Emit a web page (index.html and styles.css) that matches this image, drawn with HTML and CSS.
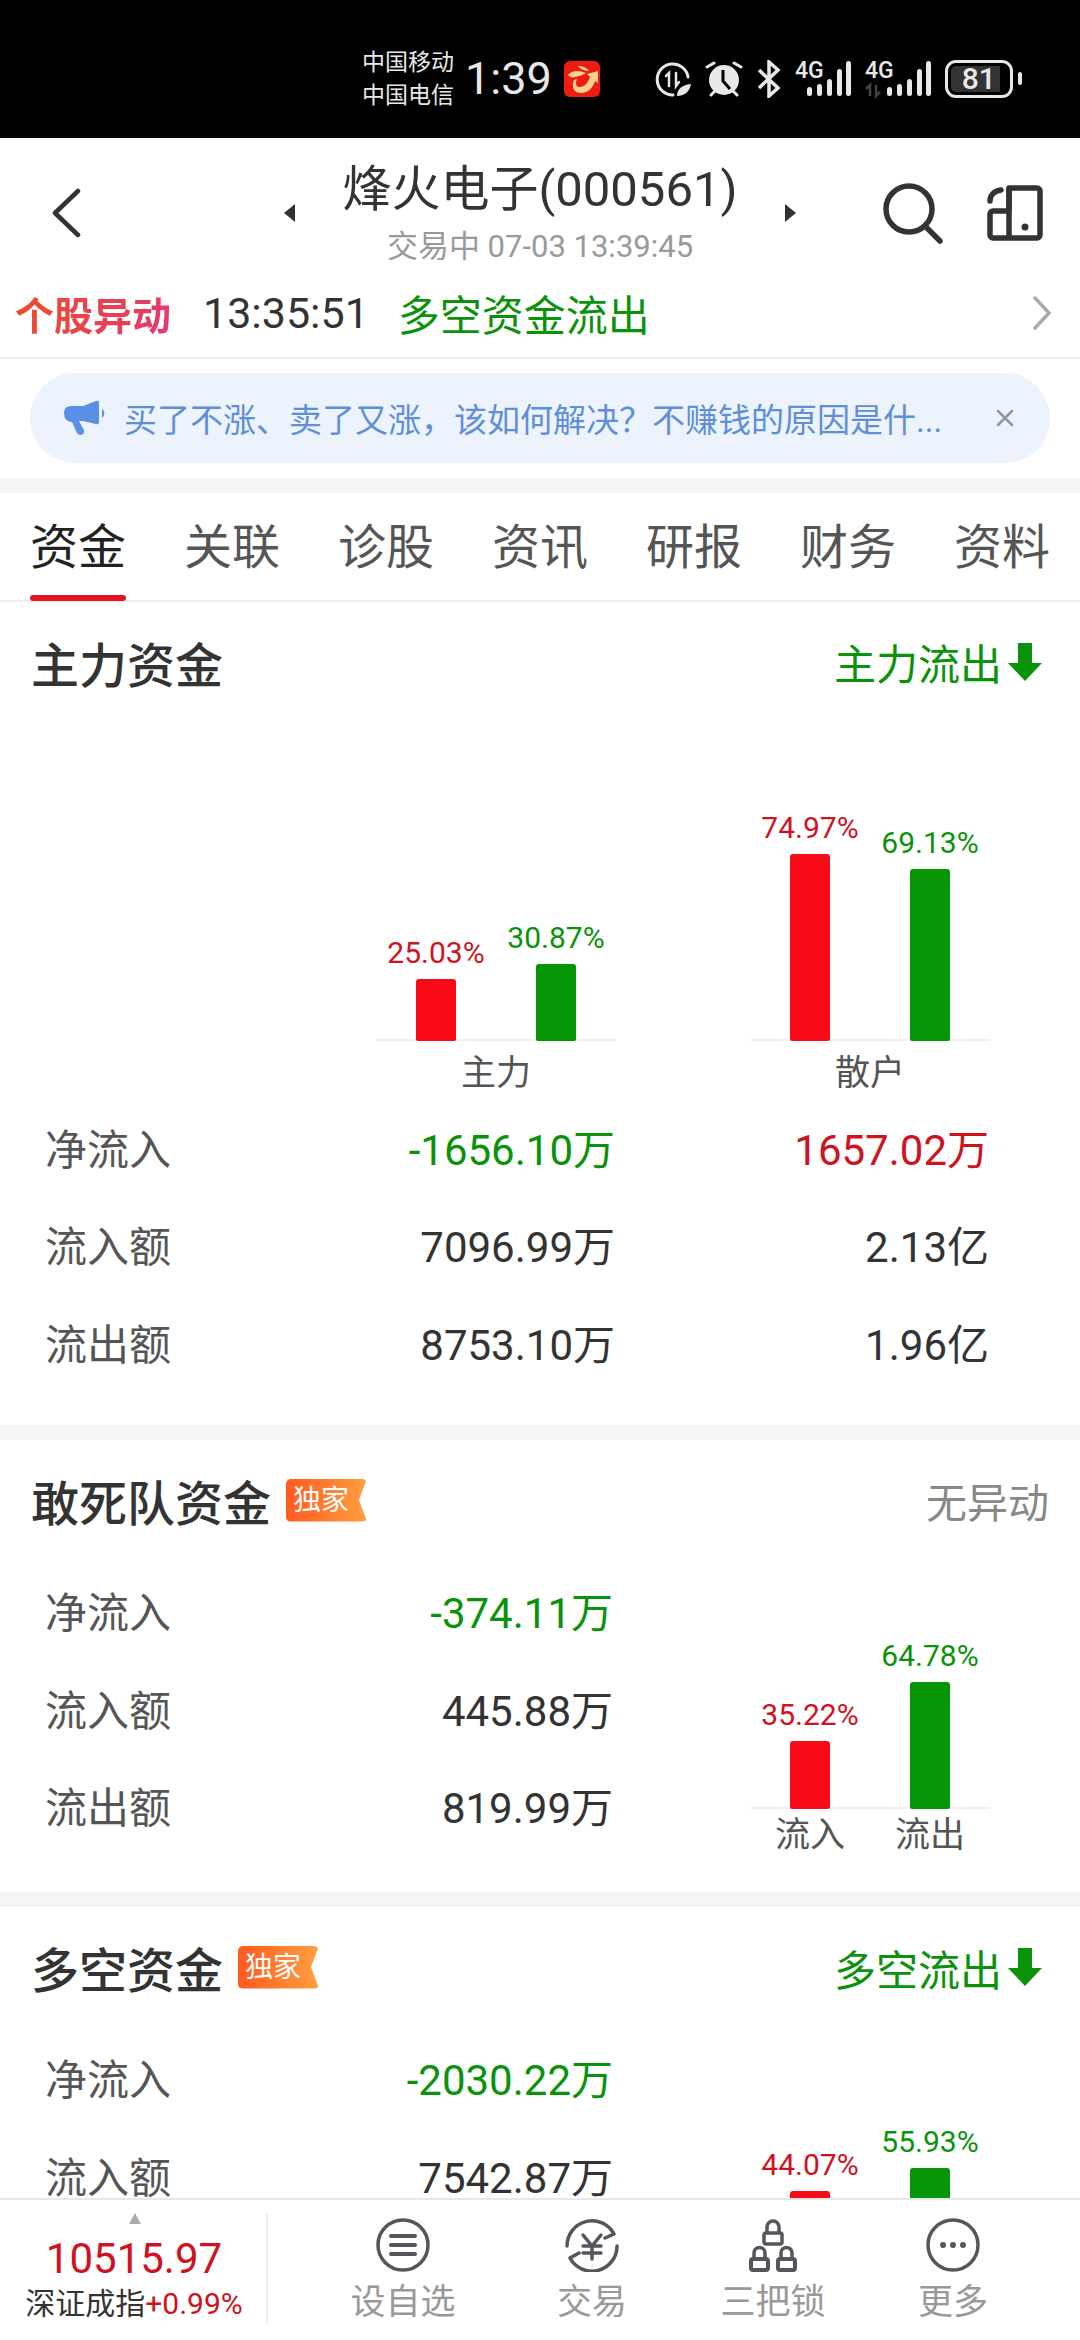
FILE: index.html
```html
<!DOCTYPE html>
<html lang="zh-CN">
<head>
    <meta charset="UTF-8">
    <meta name="viewport" content="width=device-width, initial-scale=1.0">
    <title>烽火电子(000561)</title>
    <link rel="stylesheet" href="styles.css">
</head>
<body>
    <div class="status-bar">
        <div class="carriers"><span>中国移动</span><span>中国电信</span></div>
        <div class="clock">1:39</div>
        <svg class="app-icon" width="36" height="36" viewBox="0 0 36 36">
            <rect width="36" height="36" rx="6" fill="#ee1c12"/>
            <path d="M10 19C7 26 10 32 17 32C24 32 29 27 31 20L34 22L34 10L23 13L26 16C24 22 20 26 16 26C12 26 11 23 13 18Z" fill="#fbd08c"/>
            <path d="M4 14C8 9 15 9 22 12C18 15 14 15 11 16C9 17 6 16 4 14Z" fill="#fbd08c"/>
            <path d="M14 5C19 5 23 7 25 10C21 10 16 8 14 5Z" fill="#fbd08c"/>
        </svg>
        <div class="status-icons">
            <svg width="36" height="38" viewBox="0 0 36 38" fill="none" stroke="#e8e8e8" stroke-width="3" stroke-linecap="round">
                <path d="M33 17A15.5 15.5 0 1 0 18 35"/>
                <path d="M14 26V13L11 16M21 13V26L24 22" stroke-width="2.5"/>
                <path d="M22 36C22 29 27 25 36 24C35 31 30 36 22 36Z" fill="#e8e8e8" stroke="none"/>
            </svg>
            <svg width="38" height="38" viewBox="0 0 38 38">
                <circle cx="19" cy="20" r="15" fill="#e8e8e8"/>
                <path d="M18 10V21L25 29" fill="none" stroke="#000" stroke-width="3"/>
                <path d="M2 7L9 3M36 7L29 3M6 35L10 31M32 35L28 31" stroke="#e8e8e8" stroke-width="3" stroke-linecap="round"/>
            </svg>
            <svg width="24" height="38" viewBox="0 0 24 38" fill="none" stroke="#e8e8e8" stroke-width="3.5">
                <path d="M2 10L21 28L12 36V2L21 10L2 28"/>
            </svg>
            <svg class="signal" width="56" height="38" viewBox="0 0 56 38">
                <text x="0" y="18" class="sig-text">4G</text>
                <g fill="#e8e8e8">
                    <rect x="12" y="27" width="5" height="9" rx="2.5"/>
                    <rect x="22" y="24" width="5" height="12" rx="2.5"/>
                    <rect x="32" y="19" width="5" height="17" rx="2.5"/>
                    <rect x="42" y="9" width="5" height="27" rx="2.5"/>
                    <rect x="51" y="1" width="5" height="35" rx="2.5"/>
                </g>
            </svg>
            <svg class="signal" width="66" height="38" viewBox="0 0 66 38">
                <text x="0" y="18" class="sig-text">4G</text>
                <path d="M5 36V25L1 29M11 25V36L15 32" stroke="#444" stroke-width="2.5" fill="none"/>
                <g fill="#e8e8e8">
                    <rect x="22" y="27" width="5" height="9" rx="2.5"/>
                    <rect x="32" y="24" width="5" height="12" rx="2.5"/>
                    <rect x="42" y="19" width="5" height="17" rx="2.5"/>
                    <rect x="52" y="9" width="5" height="27" rx="2.5"/>
                    <rect x="61" y="1" width="5" height="35" rx="2.5"/>
                </g>
            </svg>
            <div class="battery"><span class="battery-level">81</span></div>
            <div class="battery-nub"></div>
        </div>
    </div>

    <div class="stock-header">
        <div class="header-left">
            <svg width="30" height="50" viewBox="0 0 30 50" fill="none" stroke="#333" stroke-width="4.5" stroke-linecap="round" stroke-linejoin="round">
                <path d="M27 3L4 25L27 47"/>
            </svg>
        </div>
        <div class="header-title">
            <span class="tri tri-left"></span>
            <div class="title-block">
                <div class="stock-name">烽火电子(000561)</div>
                <div class="stock-sub">交易中 07-03 13:39:45</div>
            </div>
            <span class="tri tri-right"></span>
        </div>
        <div class="header-right">
            <svg width="62" height="62" viewBox="0 0 62 62" fill="none" stroke="#333" stroke-width="5.5" stroke-linecap="round">
                <circle cx="27" cy="27" r="23"/>
                <path d="M44 45L58 59"/>
            </svg>
            <svg width="56" height="56" viewBox="0 0 56 56" fill="none" stroke="#333" stroke-width="5.5" stroke-linejoin="round">
                <path d="M22 3H50A3 3 0 0 1 53 6V50A3 3 0 0 1 50 53H6A3 3 0 0 1 3 50V29A3 3 0 0 1 6 26H22Z"/>
                <path d="M22 3V53"/>
                <path d="M3 16C3 10 7 6 14 5" stroke-linecap="round"/>
                <circle cx="38" cy="42" r="3.5" fill="#333" stroke="none"/>
            </svg>
        </div>
    </div>

    <div class="alert-row">
        <span class="alert-tag">个股异动</span>
        <span class="alert-time">13:35:51</span>
        <span class="alert-text">多空资金流出</span>
        <svg class="alert-more" width="20" height="34" viewBox="0 0 20 34" fill="none" stroke="#aaa" stroke-width="3.5" stroke-linecap="round">
            <path d="M3 2L17 17L3 32"/>
        </svg>
    </div>

    <div class="notice-wrap">
        <div class="notice">
            <svg width="46" height="42" viewBox="0 0 46 42">
                <path d="M8 9H20L33 4Q36 3 36 6V25Q36 28 33 27L20 24H16L21 33Q22 37 18 38Q15 38 14 36L9 25H8Q1 24 1 16Q1 9 8 9Z" fill="#5a8fe6"/>
                <path d="M39 12Q44 16 39 21Z" fill="#5a8fe6"/>
            </svg>
            <span class="notice-text">买了不涨、卖了又涨&#xFF0C;该如何解决&#xFF1F;不赚钱的原因是什...</span>
            <svg class="notice-close" width="20" height="20" viewBox="0 0 20 20" fill="none" stroke="#8d97a5" stroke-width="2.5" stroke-linecap="round">
                <path d="M3 3L17 17M17 3L3 17"/>
            </svg>
        </div>
    </div>

    <div class="gap"></div>

    <div class="tabs">
        <div class="tab active">资金</div>
        <div class="tab">关联</div>
        <div class="tab">诊股</div>
        <div class="tab">资讯</div>
        <div class="tab">研报</div>
        <div class="tab">财务</div>
        <div class="tab">资料</div>
    </div>

    <div class="content">
        <div class="section">
            <div class="section-head">
                <h2>主力资金</h2>
                <div class="trend down">主力流出
                    <svg width="34" height="38" viewBox="0 0 34 38"><path d="M10 0H24V20H34L17 38L0 20H10Z" fill="#0a930a"/></svg>
                </div>
            </div>
            <div class="main-grid">
                <div></div>
                <div class="chart">
                    <div class="plot main-plot">
                        <div class="bar-col"><span class="pct red">25.03%</span><div class="bar bar-red" style="height: 62px"></div></div>
                        <div class="bar-col"><span class="pct green">30.87%</span><div class="bar bar-green" style="height: 77px"></div></div>
                    </div>
                    <div class="chart-name">主力</div>
                </div>
                <div class="chart">
                    <div class="plot main-plot">
                        <div class="bar-col"><span class="pct red">74.97%</span><div class="bar bar-red" style="height: 187px"></div></div>
                        <div class="bar-col"><span class="pct green">69.13%</span><div class="bar bar-green" style="height: 172px"></div></div>
                    </div>
                    <div class="chart-name">散户</div>
                </div>

                <div class="cell-label">净流入</div>
                <div class="cell-value green">-1656.10万</div>
                <div class="cell-value red">1657.02万</div>
                <div class="cell-label">流入额</div>
                <div class="cell-value">7096.99万</div>
                <div class="cell-value">2.13亿</div>
                <div class="cell-label">流出额</div>
                <div class="cell-value">8753.10万</div>
                <div class="cell-value">1.96亿</div>
            </div>
        </div>

        <div class="gap"></div>

        <div class="section">
            <div class="section-head">
                <h2>敢死队资金<span class="badge">独家</span></h2>
                <div class="trend muted">无异动</div>
            </div>
            <div class="flow-body">
                <div class="flow-rows">
                    <div class="flow-row"><span class="cell-label">净流入</span><span class="cell-value green">-374.11万</span></div>
                    <div class="flow-row"><span class="cell-label">流入额</span><span class="cell-value">445.88万</span></div>
                    <div class="flow-row"><span class="cell-label">流出额</span><span class="cell-value">819.99万</span></div>
                </div>
                <div class="chart">
                    <div class="plot side-plot">
                        <div class="bar-col"><span class="pct red">35.22%</span><div class="bar bar-red" style="height: 68px"></div></div>
                        <div class="bar-col"><span class="pct green">64.78%</span><div class="bar bar-green" style="height: 127px"></div></div>
                    </div>
                    <div class="side-names"><span>流入</span><span>流出</span></div>
                </div>
            </div>
        </div>

        <div class="gap"></div>

        <div class="section">
            <div class="section-head">
                <h2>多空资金<span class="badge">独家</span></h2>
                <div class="trend down">多空流出
                    <svg width="34" height="38" viewBox="0 0 34 38"><path d="M10 0H24V20H34L17 38L0 20H10Z" fill="#0a930a"/></svg>
                </div>
            </div>
            <div class="flow-body">
                <div class="flow-rows">
                    <div class="flow-row"><span class="cell-label">净流入</span><span class="cell-value green">-2030.22万</span></div>
                    <div class="flow-row"><span class="cell-label">流入额</span><span class="cell-value">7542.87万</span></div>
                </div>
                <div class="chart">
                    <div class="plot side-plot">
                        <div class="bar-col"><span class="pct red">44.07%</span><div class="bar bar-red" style="height: 85px"></div></div>
                        <div class="bar-col"><span class="pct green">55.93%</span><div class="bar bar-green" style="height: 108px"></div></div>
                    </div>
                </div>
            </div>
        </div>
    </div>

    <div class="bottom-bar">
        <div class="index-box">
            <span class="index-up"></span>
            <div class="index-value">10515.97</div>
            <div class="index-name">深证成指<span class="red">+0.99%</span></div>
        </div>
        <div class="bottom-nav">
            <div class="nav-item">
                <svg width="54" height="54" viewBox="0 0 54 54" fill="none" stroke="#55565c" stroke-width="3.5">
                    <circle cx="27" cy="27" r="25"/>
                    <path d="M15 18H39M15 27H39M15 36H39" stroke-width="4" stroke-linecap="round"/>
                </svg>
                <span>设自选</span>
            </div>
            <div class="nav-item">
                <svg width="54" height="54" viewBox="0 0 54 54" fill="none" stroke="#55565c" stroke-width="3.5" stroke-linecap="round" stroke-linejoin="round">
                    <path d="M2 28A25 25 0 0 1 49 16L40 20"/>
                    <path d="M52 28A25 25 0 0 1 5 40L14 35"/>
                    <path d="M18 17L27 28L36 17M18 28H36M18 35H36M27 28V41"/>
                </svg>
                <span>交易</span>
            </div>
            <div class="nav-item">
                <svg width="54" height="54" viewBox="0 0 54 54" fill="none" stroke="#55565c" stroke-width="3.5" stroke-linejoin="round">
                    <rect x="18" y="15" width="18" height="11" rx="2"/>
                    <path d="M21 15V9A6 6 0 0 1 33 9V15"/>
                    <rect x="5" y="41" width="17" height="11" rx="2" stroke-width="4"/>
                    <path d="M8 41V35A5.5 5.5 0 0 1 19 35V41"/>
                    <rect x="32" y="41" width="17" height="11" rx="2" stroke-width="4"/>
                    <path d="M35 41V35A5.5 5.5 0 0 1 46 35V41"/>
                </svg>
                <span>三把锁</span>
            </div>
            <div class="nav-item">
                <svg width="54" height="54" viewBox="0 0 54 54" fill="none" stroke="#55565c" stroke-width="3.5">
                    <circle cx="27" cy="27" r="25"/>
                    <circle cx="17" cy="27" r="3" fill="#55565c" stroke="none"/>
                    <circle cx="27" cy="27" r="3" fill="#55565c" stroke="none"/>
                    <circle cx="37" cy="27" r="3" fill="#55565c" stroke="none"/>
                </svg>
                <span>更多</span>
            </div>
        </div>
    </div>
</body>
</html>
```

FILE: styles.css
```css
body {
    font-family: Roboto, "Noto Sans CJK SC", sans-serif;
    background-color: #fff;
    margin: 0;
    padding: 0;
    color: #333;
    width: 1080px;
    height: 2340px;
    overflow: hidden;
    display: flex;
    flex-direction: column;
}
.red {
    color: #d0121f;
}
.green {
    color: #0a930a;
}

/* status bar */
.status-bar {
    background-color: #000;
    color: #e8e8e8;
    height: 138px;
    flex: none;
    display: flex;
    align-items: center;
    padding: 19px 0 0 362px;
    box-sizing: border-box;
}
.carriers {
    display: flex;
    flex-direction: column;
    font-size: 23px;
    line-height: 33px;
}
.clock {
    font-size: 45px;
    margin-left: 11px;
}
.app-icon {
    margin-left: 12px;
}
.status-icons {
    display: flex;
    align-items: center;
    gap: 14px;
    margin-left: 55px;
}
.signal {
    overflow: visible;
}
.sig-text {
    font-size: 23px;
    font-weight: 500;
    fill: #e8e8e8;
}
.battery {
    width: 68px;
    height: 38px;
    box-sizing: border-box;
    border: 3px solid #e8e8e8;
    border-radius: 11px;
    background: linear-gradient(to right, #333 84%, transparent 84%);
    background-clip: content-box;
    padding: 3px;
    display: flex;
    align-items: center;
    justify-content: center;
}
.battery-level {
    font-size: 30px;
    font-weight: 500;
    line-height: 30px;
}
.battery-nub {
    width: 4px;
    height: 13px;
    background-color: #e8e8e8;
    border-radius: 2px;
    margin-left: -9px;
}

/* stock header */
.stock-header {
    height: 132px;
    flex: none;
    padding-top: 18px;
    box-sizing: border-box;
    display: grid;
    grid-template-columns: 1fr auto 1fr;
    align-items: center;
}
.header-left {
    padding-left: 51px;
    display: flex;
}
.header-right {
    display: flex;
    justify-content: flex-end;
    align-items: center;
    gap: 43px;
    padding-right: 37px;
}
.header-title {
    display: flex;
    align-items: center;
    gap: 47px;
}
.title-block {
    text-align: center;
}
.stock-name {
    font-size: 49px;
    line-height: 60px;
    white-space: nowrap;
}
.stock-sub {
    font-size: 31px;
    line-height: 40px;
    margin-top: 7px;
    color: #999;
}
.tri {
    width: 0;
    height: 0;
    border-top: 9px solid transparent;
    border-bottom: 9px solid transparent;
}
.tri-left {
    border-right: 11px solid #333;
}
.tri-right {
    border-left: 11px solid #333;
}

/* alert row */
.alert-row {
    height: 89px;
    flex: none;
    box-sizing: border-box;
    border-bottom: 2px solid #eee;
    display: flex;
    align-items: center;
    padding: 0 28px 2px 15px;
}
.alert-tag {
    font-size: 39px;
    font-weight: 700;
    background: linear-gradient(to right, #ee4b2b, #e5396f);
    -webkit-background-clip: text;
    background-clip: text;
    color: transparent;
}
.alert-time {
    font-size: 43px;
    margin-left: 32px;
}
.alert-text {
    font-size: 42px;
    color: #0a930a;
    margin-left: 29px;
}
.alert-more {
    margin-left: auto;
}

/* notice */
.notice-wrap {
    padding: 14px 30px 15px;
    flex: none;
}
.notice {
    height: 90px;
    border-radius: 45px;
    background-color: #edf3fc;
    display: flex;
    align-items: center;
    padding: 0 35px 0 33px;
}
.notice-text {
    font-size: 33px;
    color: #5f8fd6;
    margin-left: 15px;
    white-space: nowrap;
}
.notice-close {
    margin-left: auto;
}
.gap {
    height: 15px;
    flex: none;
    background-color: #f5f5f5;
}

/* tabs */
.tabs {
    height: 108px;
    flex: none;
    box-sizing: border-box;
    border-bottom: 1px solid #eee;
    box-shadow: 0 1px 0 #eee;
    display: flex;
    justify-content: space-between;
    padding: 0 30px;
}
.tab {
    font-size: 48px;
    color: #555;
    line-height: 110px;
    height: 108px;
    position: relative;
}
.tab.active {
    color: #222;
}
.tab.active::after {
    content: "";
    position: absolute;
    left: 0;
    right: 0;
    bottom: 0;
    height: 6px;
    border-radius: 3px;
    background-color: #e5141e;
}

/* sections */
.content {
    flex: 1;
    overflow: hidden;
    min-height: 0;
}
.section-head {
    height: 126px;
    display: flex;
    align-items: center;
    justify-content: space-between;
    padding: 0 38px 5px 31px;
    box-sizing: border-box;
}
.section-head h2 {
    margin: 0;
    font-size: 48px;
    font-weight: 500;
    display: flex;
    align-items: center;
}
.badge {
    width: 81px;
    height: 43px;
    margin-left: 15px;
    border-radius: 5px;
    background: linear-gradient(to right, #ff5a1e, #ffa040);
    clip-path: polygon(0 0, 100% 0, 90% 50%, 100% 100%, 0 100%);
    color: #fff;
    font-size: 28px;
    font-weight: 400;
    line-height: 43px;
    padding-left: 7px;
    box-sizing: border-box;
}
.trend {
    font-size: 42px;
    display: flex;
    align-items: center;
    gap: 6px;
}
.trend.down {
    color: #0a930a;
}
.trend.muted {
    color: #888;
    font-size: 41px;
    margin-right: -7px;
}

/* main fund table */
.main-grid {
    display: grid;
    grid-template-columns: 197px 240px 240px;
    column-gap: 134px;
    grid-auto-rows: 97.5px;
    grid-template-rows: auto;
    align-items: center;
    padding: 0 0 30px 45px;
}
.cell-label {
    font-size: 42px;
    color: #555;
    line-height: 44px;
}
.cell-value {
    font-size: 42px;
    line-height: 44px;
    text-align: right;
    padding-right: 1px;
    white-space: nowrap;
}
.chart {
    width: 240px;
    flex: none;
}
.plot {
    display: flex;
    box-sizing: border-box;
    border-bottom: 2px solid #f0f0f0;
}
.main-plot {
    height: 314px;
}
.side-plot {
    height: 243px;
}
.bar-col {
    flex: 1;
    display: flex;
    flex-direction: column;
    align-items: center;
    justify-content: flex-end;
}
.pct {
    font-size: 30px;
    line-height: 32px;
    margin-bottom: 10px;
    white-space: nowrap;
}
.bar {
    width: 40px;
    border-radius: 3px 3px 2px 2px;
    margin-bottom: -2px;
}
.bar-red {
    background-color: #f90a17;
}
.bar-green {
    background-color: #059505;
}
.chart-name {
    font-size: 35px;
    line-height: 56px;
    padding-top: 5px;
    color: #555;
    text-align: center;
}
.flow-body {
    display: flex;
    justify-content: space-between;
    padding: 0 90px 29px 45px;
}
.flow-rows {
    width: 569px;
}
.flow-row {
    display: flex;
    justify-content: space-between;
    align-items: center;
    height: 97.5px;
}
.side-names {
    display: flex;
    font-size: 35px;
    line-height: 54px;
    color: #555;
}
.side-names span {
    flex: 1;
    text-align: center;
}

/* bottom bar */
.bottom-bar {
    height: 142px;
    flex: none;
    box-sizing: border-box;
    border-top: 2px solid #e8e8e8;
    background-color: #fff;
    display: flex;
}
.index-box {
    width: 268px;
    height: 111px;
    margin-top: 14px;
    box-sizing: border-box;
    border-right: 2px solid #eee;
    position: relative;
    text-align: center;
    padding-left: 2px;
    padding-top: 23px;
}
.index-up {
    position: absolute;
    left: 129px;
    top: -1px;
    width: 0;
    height: 0;
    border-left: 6px solid transparent;
    border-right: 6px solid transparent;
    border-bottom: 11px solid #aaa;
}
.index-value {
    font-size: 42px;
    line-height: 44px;
    color: #d0121f;
}
.index-name {
    font-size: 30px;
    line-height: 40px;
    color: #333;
    margin-top: 3px;
    white-space: nowrap;
}
.bottom-nav {
    flex: 1;
    display: grid;
    grid-template-columns: 186px 192px 170px 190px;
    padding-left: 42px;
}
.nav-item {
    display: flex;
    flex-direction: column;
    align-items: center;
    padding-top: 18px;
    font-size: 35px;
    color: #999;
    line-height: 50px;
}
.nav-item svg {
    margin-bottom: 6px;
}
```
